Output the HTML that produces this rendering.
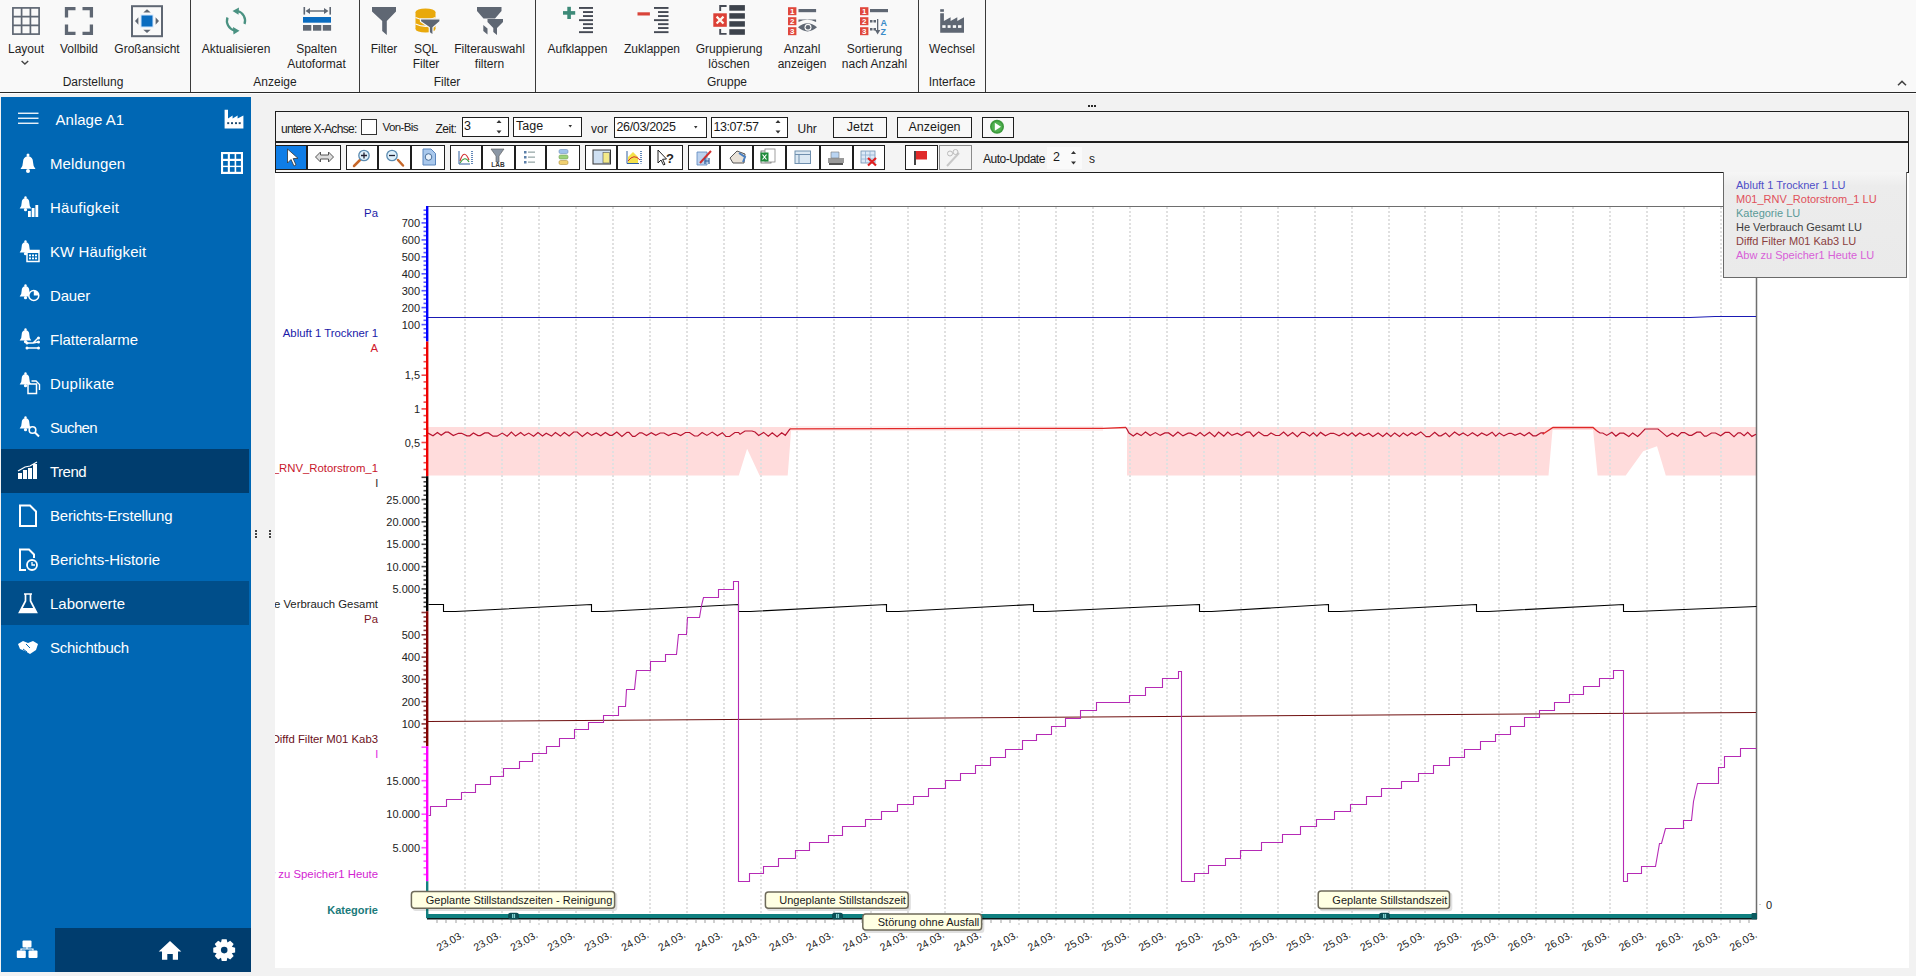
<!DOCTYPE html>
<html><head><meta charset="utf-8">
<style>
*{margin:0;padding:0;box-sizing:content-box}
html,body{width:1916px;height:976px;overflow:hidden;background:#f2f2f2;font-family:"Liberation Sans",sans-serif}
.abs{position:absolute}
.rb{position:absolute;font-size:12px;line-height:14px;color:#1f1f1f;text-align:center;white-space:nowrap}
.st{position:absolute;font-size:15px;line-height:20px;color:#fff;white-space:nowrap}
.tbt{position:absolute;font-size:12px;line-height:14px;color:#1a1a1a;white-space:nowrap}
.tbt2{position:absolute;font-size:12.5px;line-height:16px;color:#1a1a1a;white-space:nowrap}
.lg{position:absolute;left:1736px;font-size:11px;line-height:13px;white-space:nowrap}
svg text{font-family:"Liberation Sans",sans-serif}
.al{font-size:11px;fill:#222}
.dl{font-size:10.6px;fill:#222}
.sl{font-size:11.35px}
.tt{font-size:11px;fill:#1a1a1a}
</style></head><body>
<div class="abs" style="left:0;top:0;width:1916px;height:92px;background:#f9f9f9"></div>
<div class="abs" style="left:0;top:92px;width:1916px;height:1px;background:#2a2a2a"></div>
<div class="abs" style="left:0;top:93px;width:1916px;height:1px;background:#fdfdfd"></div>

<svg class="abs" style="left:0;top:0" width="1000" height="40" viewBox="0 0 1000 40">
 <g fill="none" stroke="#5f6773" stroke-width="1.7">
  <rect x="12.9" y="7.9" width="26.2" height="26.2"/>
  <path d="M21.6 8V34 M30.4 8V34 M13 16.6H39 M13 25.4H39"/>
 </g>
 <g fill="none" stroke="#5f6773" stroke-width="3.3" stroke-linecap="butt">
  <path d="M66.5 17.5V8.6H75.5 M82.5 8.6H91.4V17.5 M66.5 24.5V33.3H75.5 M82.5 33.3H91.4V24.5"/>
 </g>
 <rect x="132" y="6.2" width="30" height="30" fill="none" stroke="#5f6773" stroke-width="2"/>
 <rect x="141" y="15" width="12" height="12" fill="#0a6cc0" stroke="#cfe6ff" stroke-width="1"/>
 <g fill="#5f6773">
  <polygon points="147,9.3 143.3,12.6 150.7,12.6"/><polygon points="147,33 143.3,29.7 150.7,29.7"/>
  <polygon points="135,21 138.4,17.3 138.4,24.7"/><polygon points="159,21 155.6,17.3 155.6,24.7"/>
 </g>
 <g fill="none" stroke="#4a9282" stroke-width="2.3">
  <path d="M227.5 17.5 A10 10 0 0 0 234.5 30.5"/>
  <path d="M244.5 24 A10 10 0 0 0 237.5 11"/>
 </g>
 <g fill="#4a9282">
  <polygon points="233,27 239.5,30.8 233.5,34.5"/>
  <polygon points="239,7.5 232.5,11 238.5,14.8"/>
 </g>
 <g fill="#5f6773">
  <rect x="303.5" y="7" width="1.6" height="7.6"/><rect x="329.4" y="7" width="1.6" height="7.6"/>
  <rect x="307" y="10.3" width="20" height="1.4"/>
  <polygon points="305.5,11 310,8 310,14"/><polygon points="328.5,11 324,8 324,14"/>
  <rect x="303" y="25" width="8.3" height="5.7"/><rect x="313" y="25" width="8.3" height="5.7"/><rect x="322.8" y="25" width="8.3" height="5.7"/>
 </g>
 <rect x="303" y="17" width="28" height="5.7" fill="#0a6cc0"/>
 <polygon fill="#5f6773" points="372,7 396,7 396,11.5 386.8,21 386.8,35 382.2,31 382.2,21 372,11.5"/>
 <g>
  <ellipse cx="425.5" cy="12" rx="10" ry="3.6" fill="#e9a90c"/>
  <rect x="415.5" y="12" width="20" height="17" fill="#e9a90c"/>
  <ellipse cx="425.5" cy="29" rx="10" ry="3.6" fill="#e9a90c"/>
  <path d="M415.5 17.5 Q425.5 22 435.5 17.5 M415.5 24 Q425.5 28.5 435.5 24" stroke="#fafafa" stroke-width="1.3" fill="none"/>
  <polygon fill="#5f6773" stroke="#fafafa" stroke-width="1.2" points="420.5,18.8 440,18.8 440,21.5 433,27.6 433,35.2 429.3,32.5 429.3,27.6 420.5,21.5"/>
 </g>
 <g fill="#5f6773">
  <polygon points="477,7 501.5,7 501.5,11 495,18.6 483.5,18.6 477,11"/>
  <polygon points="487.5,19 503,19 503,22 497,28 497,35 493.3,32 493.3,28 487.5,22"/>
  <polygon points="483.3,25 487.5,28.5 487.5,34.5 483.3,31"/>
 </g>
 <g fill="#3d8a78"><rect x="567.3" y="6.8" width="3.6" height="12.2"/><rect x="563" y="11.1" width="12.2" height="3.6"/></g>
 <g fill="#454a54"><rect x="579" y="7.0" width="14" height="1.9"/><rect x="583" y="11.1" width="10" height="1.9"/><rect x="583" y="15.1" width="10" height="1.9"/><rect x="579" y="19.200000000000003" width="14" height="1.9"/><rect x="583" y="23.200000000000003" width="10" height="1.9"/><rect x="583" y="27.1" width="10" height="1.9"/><rect x="579" y="31.200000000000003" width="14" height="1.9"/></g>
 <rect x="637.5" y="12.3" width="12.4" height="3.2" fill="#d9443a"/>
 <g fill="#454a54"><rect x="654" y="7.0" width="14.5" height="1.9"/><rect x="658" y="11.1" width="10.5" height="1.9"/><rect x="658" y="15.1" width="10.5" height="1.9"/><rect x="654" y="19.200000000000003" width="14.5" height="1.9"/><rect x="658" y="23.200000000000003" width="10.5" height="1.9"/><rect x="658" y="27.1" width="10.5" height="1.9"/><rect x="654" y="31.200000000000003" width="14.5" height="1.9"/></g>
 <g fill="#3d434c">
  <rect x="729.3" y="5.1" width="15.6" height="5.6"/><rect x="729.3" y="13.2" width="15.6" height="5.5"/><rect x="729.3" y="21.2" width="15.6" height="5.5"/><rect x="729.3" y="29.2" width="15.6" height="5.6"/>
 </g>
 <path d="M726.6 6H720.2V11 M720.2 29V33.9H726.6" fill="none" stroke="#454a54" stroke-width="1.9"/>
 <rect x="713.3" y="13.3" width="13.5" height="13.5" fill="#dc4036"/>
 <path d="M716.6 16.6 L723.5 23.5 M723.5 16.6 L716.6 23.5" stroke="#fff8f0" stroke-width="2.2"/>
 <g fill="#e0473c">
  <rect x="788" y="7.2" width="8.4" height="8"/><rect x="788" y="17.2" width="8.4" height="8"/><rect x="788" y="27.2" width="8.4" height="8"/>
  <rect x="860" y="7.2" width="8.4" height="8"/><rect x="860" y="17.2" width="8.4" height="8"/><rect x="860" y="27.2" width="8.4" height="8"/>
 </g>
 <g fill="#fff" font-family="Liberation Sans" font-weight="bold" font-size="8" text-anchor="middle">
  <text x="792.2" y="14.3">1</text><text x="792.2" y="24.3">2</text><text x="792.2" y="34.3">3</text>
  <text x="864.2" y="14.3">1</text><text x="864.2" y="24.3">2</text><text x="864.2" y="34.3">3</text>
 </g>
 <g fill="#5f6773">
  <rect x="798.5" y="9" width="17.6" height="3.2"/>
  <path d="M798.5 19.5 H816.1 V22 Q807.3 17.5 798.5 22 Z"/>
  <path d="M798 27.3 Q807.5 19 817 27.3 Q807.5 35.5 798 27.3Z"/>
  <rect x="870" y="9" width="18" height="3.2"/>
 </g>
 <circle cx="808" cy="27.2" r="3.5" fill="#fafafa"/><circle cx="808" cy="27.2" r="2.3" fill="#5f6773"/>
 <g fill="#5f6773">
  <rect x="870" y="20" width="2.5" height="2.5"/><rect x="873.5" y="20" width="2.5" height="2.5"/>
  <rect x="870" y="28" width="2.5" height="2.5"/><rect x="873.5" y="28" width="2.5" height="2.5"/>
  <rect x="877" y="19" width="1.3" height="13"/><polygon points="875,30 880.3,30 877.6,34.5"/>
 </g>
 <g fill="#3a8bc8" font-family="Liberation Sans" font-weight="bold" font-size="9">
  <text x="880.5" y="26">A</text><text x="880.5" y="35">Z</text>
 </g>
 <g fill="#5f6773">
  <rect x="940.2" y="9.2" width="3.7" height="2.6"/>
  <polygon points="940.2,13.3 943.9,13.3 943.9,21 950.6,17.2 950.6,21 957.3,17.2 957.3,21 964,17.2 964,32.7 940.2,32.7"/>
 </g>
 <g fill="#fafafa"><rect x="942.3" y="25.2" width="3.3" height="2.7"/><rect x="947.6" y="25.2" width="3" height="2.7"/><rect x="952.8" y="25.2" width="3.3" height="2.7"/><rect x="958" y="25.2" width="3.4" height="2.7"/></g>
</svg>
<div class="rb" style="left:-34.0px;top:42px;width:120px">Layout</div>
<div class="rb" style="left:19.0px;top:42px;width:120px">Vollbild</div>
<div class="rb" style="left:87.0px;top:42px;width:120px">Großansicht</div>
<div class="rb" style="left:176.0px;top:42px;width:120px">Aktualisieren</div>
<div class="rb" style="left:256.5px;top:42px;width:120px">Spalten</div>
<div class="rb" style="left:256.5px;top:56.5px;width:120px">Autoformat</div>
<div class="rb" style="left:324.0px;top:42px;width:120px">Filter</div>
<div class="rb" style="left:366.0px;top:42px;width:120px">SQL</div>
<div class="rb" style="left:366.0px;top:56.5px;width:120px">Filter</div>
<div class="rb" style="left:429.5px;top:42px;width:120px">Filterauswahl</div>
<div class="rb" style="left:429.5px;top:56.5px;width:120px">filtern</div>
<div class="rb" style="left:517.5px;top:42px;width:120px">Aufklappen</div>
<div class="rb" style="left:592.0px;top:42px;width:120px">Zuklappen</div>
<div class="rb" style="left:669.0px;top:42px;width:120px">Gruppierung</div>
<div class="rb" style="left:669.0px;top:56.5px;width:120px">löschen</div>
<div class="rb" style="left:742.0px;top:42px;width:120px">Anzahl</div>
<div class="rb" style="left:742.0px;top:56.5px;width:120px">anzeigen</div>
<div class="rb" style="left:814.5px;top:42px;width:120px">Sortierung</div>
<div class="rb" style="left:814.5px;top:56.5px;width:120px">nach Anzahl</div>
<div class="rb" style="left:892.0px;top:42px;width:120px">Wechsel</div>
<div class="rb" style="left:33.0px;top:75px;width:120px">Darstellung</div>
<div class="rb" style="left:215.0px;top:75px;width:120px">Anzeige</div>
<div class="rb" style="left:387.0px;top:75px;width:120px">Filter</div>
<div class="rb" style="left:667.0px;top:75px;width:120px">Gruppe</div>
<div class="rb" style="left:892.0px;top:75px;width:120px">Interface</div>
<div class="abs" style="left:190px;top:0;width:1px;height:92px;background:#3a3a3a"></div>
<div class="abs" style="left:359px;top:0;width:1px;height:92px;background:#3a3a3a"></div>
<div class="abs" style="left:535px;top:0;width:1px;height:92px;background:#3a3a3a"></div>
<div class="abs" style="left:918px;top:0;width:1px;height:92px;background:#3a3a3a"></div>
<div class="abs" style="left:985px;top:0;width:1px;height:92px;background:#3a3a3a"></div>
<svg class="abs" style="left:0;top:0" width="40" height="70"><path d="M21.6 60.9 L24.9 64 L28.2 60.9" fill="none" stroke="#444" stroke-width="1.4"/></svg>
<svg class="abs" style="left:1880px;top:70px" width="36" height="20" viewBox="1880 70 36 20"><path d="M1898 85.2 L1902 81.4 L1906 85.2" fill="none" stroke="#444" stroke-width="1.5"/></svg>
<div class="abs" style="left:1px;top:97px;width:250px;height:875px;background:#0067b4"></div>
<div class="abs" style="left:1px;top:449px;width:248px;height:44px;background:#003d6e"></div>
<div class="abs" style="left:1px;top:581px;width:248px;height:44px;background:#004e8a"></div>
<div class="abs" style="left:55px;top:928px;width:196px;height:44px;background:#003d6e"></div>
<div class="st" style="left:55.5px;top:110px;letter-spacing:0.024px">Anlage A1</div>
<div class="st" style="left:50px;top:154px;letter-spacing:0.121px">Meldungen</div>
<div class="st" style="left:50px;top:198px;letter-spacing:0.244px">Häufigkeit</div>
<div class="st" style="left:50px;top:242px;letter-spacing:0.096px">KW Häufigkeit</div>
<div class="st" style="left:50px;top:286px;letter-spacing:-0.165px">Dauer</div>
<div class="st" style="left:50px;top:330px;letter-spacing:-0.022px">Flatteralarme</div>
<div class="st" style="left:50px;top:374px;letter-spacing:0.206px">Duplikate</div>
<div class="st" style="left:50px;top:418px;letter-spacing:-0.656px">Suchen</div>
<div class="st" style="left:50px;top:462px;letter-spacing:-0.51px">Trend</div>
<div class="st" style="left:50px;top:506px;letter-spacing:-0.188px">Berichts-Erstellung</div>
<div class="st" style="left:50px;top:550px;letter-spacing:0.004px">Berichts-Historie</div>
<div class="st" style="left:50px;top:594px;letter-spacing:-0.006px">Laborwerte</div>
<div class="st" style="left:50px;top:638px;letter-spacing:-0.252px">Schichtbuch</div>
<svg class="abs" style="left:0;top:90px" width="251" height="886" viewBox="0 90 251 886">
<g fill="#fff"><rect x="18" y="112.6" width="20.5" height="1.3"/><rect x="18" y="117.6" width="20.5" height="1.3"/><rect x="18" y="122.6" width="20.5" height="1.3"/></g>
<polygon fill="#fff" points="224.6,109.8 228,109.8 228,118.6 232.6,115.6 232.6,118.6 237.6,115.6 237.6,118.6 243.4,115.6 243.4,128.4 224.6,128.4"/>
<g fill="#1e4a70"><rect x="227.2" y="122.2" width="2" height="1.9"/><rect x="231" y="122.2" width="2" height="1.9"/><rect x="235" y="122.2" width="2" height="1.9"/><rect x="238.7" y="122.2" width="2" height="1.9"/></g>
<rect x="221" y="152" width="22" height="22" fill="#fff"/>
<rect x="223.1" y="154.1" width="4.7" height="4.7" fill="#0067b4"/>
<rect x="229.9" y="154.1" width="4.7" height="4.7" fill="#0067b4"/>
<rect x="236.2" y="154.1" width="4.7" height="4.7" fill="#0067b4"/>
<rect x="223.1" y="161" width="4.7" height="4.7" fill="#0067b4"/>
<rect x="229.9" y="161" width="4.7" height="4.7" fill="#0067b4"/>
<rect x="236.2" y="161" width="4.7" height="4.7" fill="#0067b4"/>
<rect x="223.1" y="167.1" width="4.7" height="4.7" fill="#0067b4"/>
<rect x="229.9" y="167.1" width="4.7" height="4.7" fill="#0067b4"/>
<rect x="236.2" y="167.1" width="4.7" height="4.7" fill="#0067b4"/>
<path d="M20.5 169 Q23 166 23 162 Q23 157 28 156 Q33 157 33 162 Q33 166 35.5 169 Z" fill="#fff"/><circle cx="28" cy="155" r="1.5" fill="#fff"/><circle cx="28" cy="171" r="2" fill="#fff"/>
<path d="M19.7 208.5 Q21.7 206.5 21.7 202.5 Q21.7 198.5 25.5 198.0 Q29.3 198.5 29.3 202.5 Q29.3 206.5 31.3 208.5 Z" fill="#fff"/><circle cx="25.5" cy="197.5" r="1.2" fill="#fff"/><circle cx="25.5" cy="209.7" r="1.6" fill="#fff"/>
<g fill="#fff"><rect x="28" y="211" width="2.8" height="6"/><rect x="31.7" y="208" width="2.8" height="9"/><rect x="35.4" y="205" width="2.8" height="12"/></g>
<path d="M19.7 252.5 Q21.7 250.5 21.7 246.5 Q21.7 242.5 25.5 242.0 Q29.3 242.5 29.3 246.5 Q29.3 250.5 31.3 252.5 Z" fill="#fff"/><circle cx="25.5" cy="241.5" r="1.2" fill="#fff"/><circle cx="25.5" cy="253.7" r="1.6" fill="#fff"/>
<rect x="27" y="250.5" width="12" height="11" fill="#0067b4" stroke="#fff" stroke-width="1.5"/><rect x="27" y="250.5" width="12" height="2.5" fill="#fff"/><g fill="#fff"><rect x="29" y="254.5" width="2" height="1.8"/><rect x="32" y="254.5" width="2" height="1.8"/><rect x="35" y="254.5" width="2" height="1.8"/><rect x="29" y="257.5" width="2" height="1.8"/><rect x="32" y="257.5" width="2" height="1.8"/><rect x="35" y="257.5" width="2" height="1.8"/></g>
<path d="M19.7 296.5 Q21.7 294.5 21.7 290.5 Q21.7 286.5 25.5 286.0 Q29.3 286.5 29.3 290.5 Q29.3 294.5 31.3 296.5 Z" fill="#fff"/><circle cx="25.5" cy="285.5" r="1.2" fill="#fff"/><circle cx="25.5" cy="297.7" r="1.6" fill="#fff"/>
<circle cx="33.8" cy="295.5" r="5" fill="#0067b4" stroke="#fff" stroke-width="1.5"/><path d="M33.8 295.5 V290.5 A5 5 0 0 1 38.8 295.5 Z" fill="#fff"/>
<path d="M19.7 340.5 Q21.7 338.5 21.7 334.5 Q21.7 330.5 25.5 330.0 Q29.3 330.5 29.3 334.5 Q29.3 338.5 31.3 340.5 Z" fill="#fff"/><circle cx="25.5" cy="329.5" r="1.2" fill="#fff"/><circle cx="25.5" cy="341.7" r="1.6" fill="#fff"/>
<path d="M27 343 H33 L38 338 M33 343 L38 342 M27 348 H38" stroke="#fff" stroke-width="1.4" fill="none"/><g fill="#fff"><circle cx="27" cy="343" r="1.5"/><circle cx="38.5" cy="338" r="1.5"/><circle cx="38.5" cy="342" r="1.5"/><circle cx="27" cy="348" r="1.5"/><circle cx="38.5" cy="348" r="1.5"/></g>
<path d="M19.7 384.5 Q21.7 382.5 21.7 378.5 Q21.7 374.5 25.5 374.0 Q29.3 374.5 29.3 378.5 Q29.3 382.5 31.3 384.5 Z" fill="#fff"/><circle cx="25.5" cy="373.5" r="1.2" fill="#fff"/><circle cx="25.5" cy="385.7" r="1.6" fill="#fff"/>
<path d="M31.5 381 H36 L39.5 384.5 V390" stroke="#fff" stroke-width="1.4" fill="none"/><rect x="28" y="384" width="8.5" height="9.5" fill="#0067b4" stroke="#fff" stroke-width="1.5"/>
<path d="M19.7 428.5 Q21.7 426.5 21.7 422.5 Q21.7 418.5 25.5 418.0 Q29.3 418.5 29.3 422.5 Q29.3 426.5 31.3 428.5 Z" fill="#fff"/><circle cx="25.5" cy="417.5" r="1.2" fill="#fff"/><circle cx="25.5" cy="429.7" r="1.6" fill="#fff"/>
<circle cx="32.5" cy="430" r="3.3" fill="#0067b4" stroke="#fff" stroke-width="1.6"/><path d="M35 432.5 L39 436.5" stroke="#fff" stroke-width="2"/>
<g fill="#fff"><rect x="18" y="473" width="4" height="6"/><rect x="23" y="470" width="4" height="9"/><rect x="28" y="468" width="4" height="11"/><rect x="33" y="464" width="4" height="15"/></g><path d="M18 471 L25 467 L30 466 L37 462" stroke="#fff" stroke-width="1.2" fill="none"/>
<path d="M20 505.5 H30 L36 511.5 V526 H20 Z" fill="none" stroke="#fff" stroke-width="2"/>
<path d="M26 570 H20 V549.5 H29 L34 554.5 V558" fill="none" stroke="#fff" stroke-width="2"/><circle cx="32" cy="565" r="5" fill="none" stroke="#fff" stroke-width="1.8"/><path d="M32 562 V565 H35" stroke="#fff" stroke-width="1.3" fill="none"/>
<path d="M24 594 H32 M25.5 594 V601 L19.5 612.5 H36.5 L30.5 601 V594" fill="none" stroke="#fff" stroke-width="1.7"/><path d="M22 608 H34 L36 612 H20Z" fill="#fff"/>
<path d="M18 644 L23 641 L28 643 L33 641 L38 644 L36 650 L30 654 L25 651 L20 649 Z" fill="#fff"/><path d="M26 644 L30 648 M23 649 L27 652" stroke="#0067b4" stroke-width="1"/>
<g fill="#fff"><rect x="22.5" y="940.5" width="9" height="7" rx="1"/><rect x="16.8" y="950.5" width="9" height="7.5" rx="1"/><rect x="28.5" y="950.5" width="9" height="7.5" rx="1"/></g><path d="M27 947 V949.5 M21 950.5 V949 H33 V950.5" stroke="#fff" stroke-width="1.2" fill="none"/>
<polygon fill="#fff" points="170,941 181.3,951.5 178,951.5 178,959.8 172.8,959.8 172.8,954 167.3,954 167.3,959.8 162,959.8 162,951.5 158.7,951.5"/>
<polygon fill="#fff" points="235.13,947.66 235.13,952.54 231.50,953.36 231.67,952.96 233.66,956.10 230.20,959.56 227.06,957.57 227.46,957.40 226.64,961.03 221.76,961.03 220.94,957.40 221.34,957.57 218.20,959.56 214.74,956.10 216.73,952.96 216.90,953.36 213.27,952.54 213.27,947.66 216.90,946.84 216.73,947.24 214.74,944.10 218.20,940.64 221.34,942.63 220.94,942.80 221.76,939.17 226.64,939.17 227.46,942.80 227.06,942.63 230.20,940.64 233.66,944.10 231.67,947.24 231.50,946.84"/><circle cx="224.2" cy="950.1" r="3.3" fill="#003d6e"/>
</svg>
<div class="abs" style="left:275px;top:172px;width:1634px;height:796px;background:#fff"></div>
<div class="abs" style="left:275px;top:111px;width:1632px;height:60px;border:1px solid #1e1e1e;background:#f4f4f4"></div>
<div class="abs" style="left:276px;top:141px;width:1632px;height:2px;background:#1e1e1e"></div>
<div class="tbt" style="left:281px;top:121.5px;letter-spacing:-0.7px">untere X-Achse:</div>
<div class="abs" style="left:361px;top:119px;width:14px;height:13.8px;border:1px solid #333;background:#fff"></div>
<div class="tbt" style="left:382.5px;top:120px;letter-spacing:-0.6px;font-size:11.5px">Von-Bis</div>
<div class="tbt" style="left:435.5px;top:121.5px;letter-spacing:-0.5px">Zeit:</div>
<div class="abs" style="left:462px;top:116.5px;width:45px;height:18.5px;border:1px solid #1e1e1e;background:#fff;"></div>
<div class="tbt2" style="left:464px;top:118px">3</div>
<div class="abs" style="left:513px;top:116.5px;width:67px;height:18.5px;border:1px solid #1e1e1e;background:#fff;"></div>
<div class="tbt2" style="left:516px;top:118px">Tage</div>
<div class="tbt" style="left:591px;top:121.5px">vor</div>
<div class="abs" style="left:614px;top:117px;width:91px;height:19px;border:1px solid #1e1e1e;background:#fff;"></div>
<div class="tbt2" style="left:616.5px;top:118.5px;letter-spacing:-0.35px">26/03/2025</div>
<div class="abs" style="left:711px;top:117px;width:75px;height:19px;border:1px solid #1e1e1e;background:#fff;"></div>
<div class="tbt2" style="left:713.5px;top:118.5px;letter-spacing:-0.45px">13:07:57</div>
<div class="tbt" style="left:797.5px;top:121.5px">Uhr</div>
<div class="abs" style="left:833px;top:116.5px;width:52px;height:19.5px;border:1px solid #1e1e1e;background:#fff;background:#f8f8f8"></div>
<div class="tbt2" style="left:833px;top:118.5px;width:54px;text-align:center">Jetzt</div>
<div class="abs" style="left:897px;top:116.5px;width:73px;height:19.5px;border:1px solid #1e1e1e;background:#fff;background:#f8f8f8"></div>
<div class="tbt2" style="left:897px;top:118.5px;width:75px;text-align:center">Anzeigen</div>
<div class="abs" style="left:982px;top:116.5px;width:30px;height:19.5px;border:1px solid #1e1e1e;background:#fff;background:#f8f8f8"></div>
<div class="tbt" style="left:983px;top:152px;letter-spacing:-0.5px">Auto-Update</div>
<div class="abs" style="left:1047px;top:147px;width:35px;height:22px;background:#fafafa"></div>
<div class="tbt2" style="left:1053px;top:148.5px">2</div>
<div class="tbt" style="left:1089px;top:152px">s</div>
<div class="abs" style="left:275px;top:145px;width:30px;height:23px;border:1px solid #1e1e1e;background:#0f7de6"></div>
<div class="abs" style="left:307px;top:145px;width:32px;height:23px;border:1px solid #1e1e1e;background:#fff"></div>
<div class="abs" style="left:346px;top:145px;width:30px;height:23px;border:1px solid #1e1e1e;background:#fff"></div>
<div class="abs" style="left:378px;top:145px;width:31px;height:23px;border:1px solid #1e1e1e;background:#fff"></div>
<div class="abs" style="left:411px;top:145px;width:32px;height:23px;border:1px solid #1e1e1e;background:#fff"></div>
<div class="abs" style="left:450px;top:145px;width:30px;height:23px;border:1px solid #1e1e1e;background:#fff"></div>
<div class="abs" style="left:482px;top:145px;width:31px;height:23px;border:1px solid #1e1e1e;background:#fff"></div>
<div class="abs" style="left:515px;top:145px;width:29px;height:23px;border:1px solid #1e1e1e;background:#fff"></div>
<div class="abs" style="left:546px;top:145px;width:32px;height:23px;border:1px solid #1e1e1e;background:#fff"></div>
<div class="abs" style="left:585px;top:145px;width:30px;height:23px;border:1px solid #1e1e1e;background:#fff"></div>
<div class="abs" style="left:617px;top:145px;width:31px;height:23px;border:1px solid #1e1e1e;background:#fff"></div>
<div class="abs" style="left:650px;top:145px;width:31px;height:23px;border:1px solid #1e1e1e;background:#fff"></div>
<div class="abs" style="left:688px;top:145px;width:30px;height:23px;border:1px solid #1e1e1e;background:#fff"></div>
<div class="abs" style="left:720px;top:145px;width:31px;height:23px;border:1px solid #1e1e1e;background:#fff"></div>
<div class="abs" style="left:753px;top:145px;width:31px;height:23px;border:1px solid #1e1e1e;background:#fff"></div>
<div class="abs" style="left:786px;top:145px;width:32px;height:23px;border:1px solid #1e1e1e;background:#fff"></div>
<div class="abs" style="left:820px;top:145px;width:31px;height:23px;border:1px solid #1e1e1e;background:#fff"></div>
<div class="abs" style="left:853px;top:145px;width:30px;height:23px;border:1px solid #1e1e1e;background:#fff"></div>
<div class="abs" style="left:905px;top:145px;width:31px;height:23px;border:1px solid #1e1e1e;background:#fff"></div>
<div class="abs" style="left:939px;top:145px;width:31px;height:23px;border:1px solid #8a8a8a;background:#f4f4f4"></div>
<svg class="abs" style="left:0;top:100px" width="1100" height="80" viewBox="0 100 1100 80">
 <path d="M287.5 149 L287.5 163 L291 159.5 L294 166 L296 165 L293.2 158.6 L298 158.3 Z" fill="#fff" stroke="#333" stroke-width="0.8"/>
 <path d="M315.5 157 L320.5 152 V155 H328.5 V152 L333.5 157 L328.5 162 V159 H320.5 V162 Z" fill="#ddd" stroke="#555" stroke-width="1"/>
 <g stroke="#c7682a" stroke-width="2.5" stroke-linecap="round"><path d="M354 166 L360 160"/><path d="M398 160 L403 165.5"/></g>
 <circle cx="364" cy="155.5" r="5.2" fill="#dff0fb" stroke="#5a8ab0" stroke-width="1.3"/>
 <path d="M361 155.5 H367 M364 152.5 V158.5" stroke="#223" stroke-width="1.3"/>
 <circle cx="392" cy="155.5" r="5.2" fill="#dff0fb" stroke="#5a8ab0" stroke-width="1.3"/>
 <path d="M389 155.5 H395" stroke="#223" stroke-width="1.3"/>
 <path d="M423 149 H431 L435.5 153.5 V165 H423 Z" fill="#a9c8ec" stroke="#5b86bd" stroke-width="1"/>
 <circle cx="428.5" cy="157" r="3.3" fill="#e8f2fc" stroke="#4a6f9a" stroke-width="1"/>
 <path d="M459 151 V164 H470" stroke="#3060a0" stroke-width="1" fill="none"/><path d="M472 151 V164" stroke="#3060a0" stroke-width="1.5" stroke-dasharray="1,1" fill="none"/>
 <path d="M460 161 Q464 148 469 160" stroke="#d03030" fill="none" stroke-width="1.2"/><path d="M460 163 Q465 155 469 162" stroke="#40a040" fill="none" stroke-width="1.2"/>
 <path d="M491 149 H504 L499 156 V162 H496 V156 Z" fill="#8b97a5" stroke="#555" stroke-width="0.6"/>
 <text x="498" y="166.5" font-size="6.5" font-family="Liberation Sans" font-weight="bold" text-anchor="middle" fill="#333">LAB</text>
 <g fill="#5b7fa8"><rect x="524" y="151" width="2.5" height="2.5"/><rect x="524" y="156" width="2.5" height="2.5"/><rect x="524" y="161" width="2.5" height="2.5"/></g>
 <g fill="#9aa"><rect x="528" y="151.5" width="7" height="1.3"/><rect x="528" y="156.5" width="7" height="1.3"/><rect x="528" y="161.5" width="7" height="1.3"/></g>
 <rect x="559" y="149.5" width="9" height="4" rx="1.5" fill="#9ec2ea" stroke="#6b8fba" stroke-width="0.6"/>
 <rect x="559" y="155" width="9" height="4" rx="1.5" fill="#9bd27a" stroke="#6b9a50" stroke-width="0.6"/>
 <rect x="559" y="160.5" width="9" height="4" rx="1.5" fill="#f0d070" stroke="#b09040" stroke-width="0.6"/>
 <rect x="593" y="150" width="17.5" height="14" fill="#cfe0f2" stroke="#333" stroke-width="1"/>
 <rect x="603" y="152.5" width="6.5" height="10.5" fill="#f3ea8a" stroke="#555" stroke-width="0.6"/>
 <path d="M627 151 V163.5 H639" stroke="#3060a0" stroke-width="1" fill="none"/><path d="M641 151 V163.5" stroke="#3060a0" stroke-width="1.5" stroke-dasharray="1,1" fill="none"/>
 <path d="M628 157 L633 152 L638 157 V163 H628 Z" fill="#f4e14a"/><path d="M628 161 Q634 153 640 160" stroke="#d03030" fill="none" stroke-width="1"/>
 <path d="M658 150 L658 163 L661 160 L663.5 165 L665 164.3 L662.6 159.3 L666.5 159 Z" fill="#fff" stroke="#222" stroke-width="1"/>
 <text x="666" y="162.5" font-size="13" font-family="Liberation Sans" font-weight="bold" fill="#222">?</text>
 <path d="M697 152 H707 V165 H697 Z" fill="#bcd2ee" stroke="#5b86bd" stroke-width="0.8"/><path d="M700 163 L711 151" stroke="#d03030" stroke-width="2"/><path d="M705 164 V158 M709 164 V158 M705 161 H709" stroke="#2a5a9a" stroke-width="1.2"/>
 <path d="M730 158 L737 151 L745 154 L744 163 L733 163 Z" fill="#e9e2d8" stroke="#555" stroke-width="1"/><path d="M739 153 L745 157 L743 162" stroke="#4a7fc0" stroke-width="2" fill="none"/>
 <rect x="761" y="151" width="10" height="12" fill="#fff" stroke="#666" stroke-width="0.8"/><rect x="765" y="149" width="10" height="13" fill="#fff" stroke="#888" stroke-width="0.8"/><rect x="760.5" y="152.5" width="8" height="9" fill="#1e8a3a"/><path d="M762.5 154.5 L766.5 159.5 M766.5 154.5 L762.5 159.5" stroke="#fff" stroke-width="1.2"/>
 <rect x="795" y="151" width="15.5" height="12.5" fill="#dbe8f3" stroke="#6f8fae" stroke-width="1"/><path d="M795 154.5 H810.5 M799 154.5 V163.5" stroke="#6f8fae" stroke-width="1"/>
 <path d="M828 158 H844 V163 H828 Z" fill="#9a9a9a"/><path d="M831 152 H839 V158 H831 Z" fill="#b9d4f2" stroke="#777" stroke-width="0.6"/><path d="M829 163 H843 V165 H829 Z" fill="#555"/>
 <rect x="861" y="151" width="14" height="12" fill="#dde9f7" stroke="#6f8fae" stroke-width="0.8"/><path d="M861 155 H875 M861 159 H875 M865.5 151 V163 M870 151 V163" stroke="#8fb0d0" stroke-width="0.8"/><path d="M868 158 L876 165.5 M876 158 L868 165.5" stroke="#e02020" stroke-width="2.2"/>
 <path d="M915 151 V165" stroke="#444" stroke-width="2"/><path d="M916 151 H927 V159.5 H916 Z" fill="#e02a2a"/>
 <path d="M947 166 L959 153" stroke="#c8c8c8" stroke-width="2"/><circle cx="950" cy="153.5" r="2.5" fill="none" stroke="#bbb" stroke-width="1"/><circle cx="955.5" cy="152" r="2.5" fill="none" stroke="#bbb" stroke-width="1"/>
 <circle cx="997" cy="126.8" r="7" fill="#3d9a3d"/><circle cx="997" cy="126.8" r="5.3" fill="#4fb04f"/><path d="M994.8 122.8 L1001 126.8 L994.8 130.8 Z" fill="#fff"/>
 <g fill="#333"><polygon points="499,120 496.5,123 501.5,123"/><polygon points="499,133.5 496.5,130.5 501.5,130.5"/>
 <polygon points="572,125 568.5,125 570.25,127.5"/><polygon points="697.5,126 694,126 695.75,128.5"/>
 <polygon points="778,120 775.5,123 780.5,123"/><polygon points="778,133.5 775.5,130.5 780.5,130.5"/>
 <polygon points="1073.5,151 1071,154 1076,154"/><polygon points="1073.5,164.5 1071,161.5 1076,161.5"/></g>
</svg>
<div class="abs" style="left:1088px;top:105px;width:2px;height:2px;background:#2a2a2a"></div><div class="abs" style="left:1091px;top:105px;width:2px;height:2px;background:#2a2a2a"></div><div class="abs" style="left:1094px;top:105px;width:2px;height:2px;background:#2a2a2a"></div>
<div class="abs" style="left:255px;top:530px;width:2px;height:8px;background:repeating-linear-gradient(180deg,#444 0 2px,transparent 2px 3px)"></div>
<div class="abs" style="left:268.5px;top:530px;width:2px;height:8px;background:repeating-linear-gradient(180deg,#444 0 2px,transparent 2px 3px)"></div>
<svg class="abs" style="left:0;top:0;overflow:hidden" width="1916" height="976" viewBox="0 0 1916 976">
<defs><clipPath id="cp"><rect x="275" y="172" width="1634" height="796"/></clipPath></defs>
<g clip-path="url(#cp)">
<polygon fill="#ffdcdc" points="428,427 791.4,427 787.7,475.6 759.6,475.6 747.1,448.8 738.8,475.6 428,475.6"/>
<polygon fill="#ffeded" points="791,426 1103,426 1103,431 791,431"/>
<polygon fill="#ffdcdc" points="1127,427 1756,427 1756,475.6 1665.8,475.6 1657,446.3 1643.2,451.3 1625.7,475.6 1597.6,475.6 1593.1,430 1552.5,430 1548.5,475.6 1127,475.6"/>
<line x1="465" y1="207" x2="465" y2="926" stroke="#e0e0e0" stroke-width="2" stroke-dasharray="2,2"/>
<line x1="502" y1="207" x2="502" y2="926" stroke="#e0e0e0" stroke-width="2" stroke-dasharray="2,2"/>
<line x1="539" y1="207" x2="539" y2="926" stroke="#e0e0e0" stroke-width="2" stroke-dasharray="2,2"/>
<line x1="576" y1="207" x2="576" y2="926" stroke="#e0e0e0" stroke-width="2" stroke-dasharray="2,2"/>
<line x1="613" y1="207" x2="613" y2="926" stroke="#e0e0e0" stroke-width="2" stroke-dasharray="2,2"/>
<line x1="650" y1="207" x2="650" y2="926" stroke="#e0e0e0" stroke-width="2" stroke-dasharray="2,2"/>
<line x1="687" y1="207" x2="687" y2="926" stroke="#e0e0e0" stroke-width="2" stroke-dasharray="2,2"/>
<line x1="724" y1="207" x2="724" y2="926" stroke="#e0e0e0" stroke-width="2" stroke-dasharray="2,2"/>
<line x1="761" y1="207" x2="761" y2="926" stroke="#e0e0e0" stroke-width="2" stroke-dasharray="2,2"/>
<line x1="797" y1="207" x2="797" y2="926" stroke="#e0e0e0" stroke-width="2" stroke-dasharray="2,2"/>
<line x1="834" y1="207" x2="834" y2="926" stroke="#e0e0e0" stroke-width="2" stroke-dasharray="2,2"/>
<line x1="871" y1="207" x2="871" y2="926" stroke="#e0e0e0" stroke-width="2" stroke-dasharray="2,2"/>
<line x1="908" y1="207" x2="908" y2="926" stroke="#e0e0e0" stroke-width="2" stroke-dasharray="2,2"/>
<line x1="945" y1="207" x2="945" y2="926" stroke="#e0e0e0" stroke-width="2" stroke-dasharray="2,2"/>
<line x1="982" y1="207" x2="982" y2="926" stroke="#e0e0e0" stroke-width="2" stroke-dasharray="2,2"/>
<line x1="1019" y1="207" x2="1019" y2="926" stroke="#e0e0e0" stroke-width="2" stroke-dasharray="2,2"/>
<line x1="1056" y1="207" x2="1056" y2="926" stroke="#e0e0e0" stroke-width="2" stroke-dasharray="2,2"/>
<line x1="1093" y1="207" x2="1093" y2="926" stroke="#e0e0e0" stroke-width="2" stroke-dasharray="2,2"/>
<line x1="1130" y1="207" x2="1130" y2="926" stroke="#e0e0e0" stroke-width="2" stroke-dasharray="2,2"/>
<line x1="1167" y1="207" x2="1167" y2="926" stroke="#e0e0e0" stroke-width="2" stroke-dasharray="2,2"/>
<line x1="1204" y1="207" x2="1204" y2="926" stroke="#e0e0e0" stroke-width="2" stroke-dasharray="2,2"/>
<line x1="1241" y1="207" x2="1241" y2="926" stroke="#e0e0e0" stroke-width="2" stroke-dasharray="2,2"/>
<line x1="1278" y1="207" x2="1278" y2="926" stroke="#e0e0e0" stroke-width="2" stroke-dasharray="2,2"/>
<line x1="1315" y1="207" x2="1315" y2="926" stroke="#e0e0e0" stroke-width="2" stroke-dasharray="2,2"/>
<line x1="1352" y1="207" x2="1352" y2="926" stroke="#e0e0e0" stroke-width="2" stroke-dasharray="2,2"/>
<line x1="1389" y1="207" x2="1389" y2="926" stroke="#e0e0e0" stroke-width="2" stroke-dasharray="2,2"/>
<line x1="1425" y1="207" x2="1425" y2="926" stroke="#e0e0e0" stroke-width="2" stroke-dasharray="2,2"/>
<line x1="1462" y1="207" x2="1462" y2="926" stroke="#e0e0e0" stroke-width="2" stroke-dasharray="2,2"/>
<line x1="1499" y1="207" x2="1499" y2="926" stroke="#e0e0e0" stroke-width="2" stroke-dasharray="2,2"/>
<line x1="1536" y1="207" x2="1536" y2="926" stroke="#e0e0e0" stroke-width="2" stroke-dasharray="2,2"/>
<line x1="1573" y1="207" x2="1573" y2="926" stroke="#e0e0e0" stroke-width="2" stroke-dasharray="2,2"/>
<line x1="1610" y1="207" x2="1610" y2="926" stroke="#e0e0e0" stroke-width="2" stroke-dasharray="2,2"/>
<line x1="1647" y1="207" x2="1647" y2="926" stroke="#e0e0e0" stroke-width="2" stroke-dasharray="2,2"/>
<line x1="1684" y1="207" x2="1684" y2="926" stroke="#e0e0e0" stroke-width="2" stroke-dasharray="2,2"/>
<line x1="1721" y1="207" x2="1721" y2="926" stroke="#e0e0e0" stroke-width="2" stroke-dasharray="2,2"/>
<line x1="437" y1="920" x2="437" y2="923" stroke="#d0d0d0" stroke-width="2"/>
<line x1="446" y1="920" x2="446" y2="923" stroke="#d0d0d0" stroke-width="2"/>
<line x1="456" y1="920" x2="456" y2="923" stroke="#d0d0d0" stroke-width="2"/>
<line x1="474" y1="920" x2="474" y2="923" stroke="#d0d0d0" stroke-width="2"/>
<line x1="483" y1="920" x2="483" y2="923" stroke="#d0d0d0" stroke-width="2"/>
<line x1="493" y1="920" x2="493" y2="923" stroke="#d0d0d0" stroke-width="2"/>
<line x1="511" y1="920" x2="511" y2="923" stroke="#d0d0d0" stroke-width="2"/>
<line x1="520" y1="920" x2="520" y2="923" stroke="#d0d0d0" stroke-width="2"/>
<line x1="530" y1="920" x2="530" y2="923" stroke="#d0d0d0" stroke-width="2"/>
<line x1="548" y1="920" x2="548" y2="923" stroke="#d0d0d0" stroke-width="2"/>
<line x1="557" y1="920" x2="557" y2="923" stroke="#d0d0d0" stroke-width="2"/>
<line x1="567" y1="920" x2="567" y2="923" stroke="#d0d0d0" stroke-width="2"/>
<line x1="585" y1="920" x2="585" y2="923" stroke="#d0d0d0" stroke-width="2"/>
<line x1="594" y1="920" x2="594" y2="923" stroke="#d0d0d0" stroke-width="2"/>
<line x1="603" y1="920" x2="603" y2="923" stroke="#d0d0d0" stroke-width="2"/>
<line x1="622" y1="920" x2="622" y2="923" stroke="#d0d0d0" stroke-width="2"/>
<line x1="631" y1="920" x2="631" y2="923" stroke="#d0d0d0" stroke-width="2"/>
<line x1="640" y1="920" x2="640" y2="923" stroke="#d0d0d0" stroke-width="2"/>
<line x1="659" y1="920" x2="659" y2="923" stroke="#d0d0d0" stroke-width="2"/>
<line x1="668" y1="920" x2="668" y2="923" stroke="#d0d0d0" stroke-width="2"/>
<line x1="677" y1="920" x2="677" y2="923" stroke="#d0d0d0" stroke-width="2"/>
<line x1="696" y1="920" x2="696" y2="923" stroke="#d0d0d0" stroke-width="2"/>
<line x1="705" y1="920" x2="705" y2="923" stroke="#d0d0d0" stroke-width="2"/>
<line x1="714" y1="920" x2="714" y2="923" stroke="#d0d0d0" stroke-width="2"/>
<line x1="733" y1="920" x2="733" y2="923" stroke="#d0d0d0" stroke-width="2"/>
<line x1="742" y1="920" x2="742" y2="923" stroke="#d0d0d0" stroke-width="2"/>
<line x1="751" y1="920" x2="751" y2="923" stroke="#d0d0d0" stroke-width="2"/>
<line x1="770" y1="920" x2="770" y2="923" stroke="#d0d0d0" stroke-width="2"/>
<line x1="779" y1="920" x2="779" y2="923" stroke="#d0d0d0" stroke-width="2"/>
<line x1="788" y1="920" x2="788" y2="923" stroke="#d0d0d0" stroke-width="2"/>
<line x1="807" y1="920" x2="807" y2="923" stroke="#d0d0d0" stroke-width="2"/>
<line x1="816" y1="920" x2="816" y2="923" stroke="#d0d0d0" stroke-width="2"/>
<line x1="825" y1="920" x2="825" y2="923" stroke="#d0d0d0" stroke-width="2"/>
<line x1="844" y1="920" x2="844" y2="923" stroke="#d0d0d0" stroke-width="2"/>
<line x1="853" y1="920" x2="853" y2="923" stroke="#d0d0d0" stroke-width="2"/>
<line x1="862" y1="920" x2="862" y2="923" stroke="#d0d0d0" stroke-width="2"/>
<line x1="881" y1="920" x2="881" y2="923" stroke="#d0d0d0" stroke-width="2"/>
<line x1="890" y1="920" x2="890" y2="923" stroke="#d0d0d0" stroke-width="2"/>
<line x1="899" y1="920" x2="899" y2="923" stroke="#d0d0d0" stroke-width="2"/>
<line x1="918" y1="920" x2="918" y2="923" stroke="#d0d0d0" stroke-width="2"/>
<line x1="927" y1="920" x2="927" y2="923" stroke="#d0d0d0" stroke-width="2"/>
<line x1="936" y1="920" x2="936" y2="923" stroke="#d0d0d0" stroke-width="2"/>
<line x1="954" y1="920" x2="954" y2="923" stroke="#d0d0d0" stroke-width="2"/>
<line x1="964" y1="920" x2="964" y2="923" stroke="#d0d0d0" stroke-width="2"/>
<line x1="973" y1="920" x2="973" y2="923" stroke="#d0d0d0" stroke-width="2"/>
<line x1="991" y1="920" x2="991" y2="923" stroke="#d0d0d0" stroke-width="2"/>
<line x1="1001" y1="920" x2="1001" y2="923" stroke="#d0d0d0" stroke-width="2"/>
<line x1="1010" y1="920" x2="1010" y2="923" stroke="#d0d0d0" stroke-width="2"/>
<line x1="1028" y1="920" x2="1028" y2="923" stroke="#d0d0d0" stroke-width="2"/>
<line x1="1038" y1="920" x2="1038" y2="923" stroke="#d0d0d0" stroke-width="2"/>
<line x1="1047" y1="920" x2="1047" y2="923" stroke="#d0d0d0" stroke-width="2"/>
<line x1="1065" y1="920" x2="1065" y2="923" stroke="#d0d0d0" stroke-width="2"/>
<line x1="1075" y1="920" x2="1075" y2="923" stroke="#d0d0d0" stroke-width="2"/>
<line x1="1084" y1="920" x2="1084" y2="923" stroke="#d0d0d0" stroke-width="2"/>
<line x1="1102" y1="920" x2="1102" y2="923" stroke="#d0d0d0" stroke-width="2"/>
<line x1="1111" y1="920" x2="1111" y2="923" stroke="#d0d0d0" stroke-width="2"/>
<line x1="1121" y1="920" x2="1121" y2="923" stroke="#d0d0d0" stroke-width="2"/>
<line x1="1139" y1="920" x2="1139" y2="923" stroke="#d0d0d0" stroke-width="2"/>
<line x1="1148" y1="920" x2="1148" y2="923" stroke="#d0d0d0" stroke-width="2"/>
<line x1="1158" y1="920" x2="1158" y2="923" stroke="#d0d0d0" stroke-width="2"/>
<line x1="1176" y1="920" x2="1176" y2="923" stroke="#d0d0d0" stroke-width="2"/>
<line x1="1185" y1="920" x2="1185" y2="923" stroke="#d0d0d0" stroke-width="2"/>
<line x1="1195" y1="920" x2="1195" y2="923" stroke="#d0d0d0" stroke-width="2"/>
<line x1="1213" y1="920" x2="1213" y2="923" stroke="#d0d0d0" stroke-width="2"/>
<line x1="1222" y1="920" x2="1222" y2="923" stroke="#d0d0d0" stroke-width="2"/>
<line x1="1232" y1="920" x2="1232" y2="923" stroke="#d0d0d0" stroke-width="2"/>
<line x1="1250" y1="920" x2="1250" y2="923" stroke="#d0d0d0" stroke-width="2"/>
<line x1="1259" y1="920" x2="1259" y2="923" stroke="#d0d0d0" stroke-width="2"/>
<line x1="1268" y1="920" x2="1268" y2="923" stroke="#d0d0d0" stroke-width="2"/>
<line x1="1287" y1="920" x2="1287" y2="923" stroke="#d0d0d0" stroke-width="2"/>
<line x1="1296" y1="920" x2="1296" y2="923" stroke="#d0d0d0" stroke-width="2"/>
<line x1="1305" y1="920" x2="1305" y2="923" stroke="#d0d0d0" stroke-width="2"/>
<line x1="1324" y1="920" x2="1324" y2="923" stroke="#d0d0d0" stroke-width="2"/>
<line x1="1333" y1="920" x2="1333" y2="923" stroke="#d0d0d0" stroke-width="2"/>
<line x1="1342" y1="920" x2="1342" y2="923" stroke="#d0d0d0" stroke-width="2"/>
<line x1="1361" y1="920" x2="1361" y2="923" stroke="#d0d0d0" stroke-width="2"/>
<line x1="1370" y1="920" x2="1370" y2="923" stroke="#d0d0d0" stroke-width="2"/>
<line x1="1379" y1="920" x2="1379" y2="923" stroke="#d0d0d0" stroke-width="2"/>
<line x1="1398" y1="920" x2="1398" y2="923" stroke="#d0d0d0" stroke-width="2"/>
<line x1="1407" y1="920" x2="1407" y2="923" stroke="#d0d0d0" stroke-width="2"/>
<line x1="1416" y1="920" x2="1416" y2="923" stroke="#d0d0d0" stroke-width="2"/>
<line x1="1435" y1="920" x2="1435" y2="923" stroke="#d0d0d0" stroke-width="2"/>
<line x1="1444" y1="920" x2="1444" y2="923" stroke="#d0d0d0" stroke-width="2"/>
<line x1="1453" y1="920" x2="1453" y2="923" stroke="#d0d0d0" stroke-width="2"/>
<line x1="1472" y1="920" x2="1472" y2="923" stroke="#d0d0d0" stroke-width="2"/>
<line x1="1481" y1="920" x2="1481" y2="923" stroke="#d0d0d0" stroke-width="2"/>
<line x1="1490" y1="920" x2="1490" y2="923" stroke="#d0d0d0" stroke-width="2"/>
<line x1="1509" y1="920" x2="1509" y2="923" stroke="#d0d0d0" stroke-width="2"/>
<line x1="1518" y1="920" x2="1518" y2="923" stroke="#d0d0d0" stroke-width="2"/>
<line x1="1527" y1="920" x2="1527" y2="923" stroke="#d0d0d0" stroke-width="2"/>
<line x1="1546" y1="920" x2="1546" y2="923" stroke="#d0d0d0" stroke-width="2"/>
<line x1="1555" y1="920" x2="1555" y2="923" stroke="#d0d0d0" stroke-width="2"/>
<line x1="1564" y1="920" x2="1564" y2="923" stroke="#d0d0d0" stroke-width="2"/>
<line x1="1583" y1="920" x2="1583" y2="923" stroke="#d0d0d0" stroke-width="2"/>
<line x1="1592" y1="920" x2="1592" y2="923" stroke="#d0d0d0" stroke-width="2"/>
<line x1="1601" y1="920" x2="1601" y2="923" stroke="#d0d0d0" stroke-width="2"/>
<line x1="1619" y1="920" x2="1619" y2="923" stroke="#d0d0d0" stroke-width="2"/>
<line x1="1629" y1="920" x2="1629" y2="923" stroke="#d0d0d0" stroke-width="2"/>
<line x1="1638" y1="920" x2="1638" y2="923" stroke="#d0d0d0" stroke-width="2"/>
<line x1="1656" y1="920" x2="1656" y2="923" stroke="#d0d0d0" stroke-width="2"/>
<line x1="1666" y1="920" x2="1666" y2="923" stroke="#d0d0d0" stroke-width="2"/>
<line x1="1675" y1="920" x2="1675" y2="923" stroke="#d0d0d0" stroke-width="2"/>
<line x1="1693" y1="920" x2="1693" y2="923" stroke="#d0d0d0" stroke-width="2"/>
<line x1="1703" y1="920" x2="1703" y2="923" stroke="#d0d0d0" stroke-width="2"/>
<line x1="1712" y1="920" x2="1712" y2="923" stroke="#d0d0d0" stroke-width="2"/>
<line x1="1730" y1="920" x2="1730" y2="923" stroke="#d0d0d0" stroke-width="2"/>
<line x1="1740" y1="920" x2="1740" y2="923" stroke="#d0d0d0" stroke-width="2"/>
<line x1="1749" y1="920" x2="1749" y2="923" stroke="#d0d0d0" stroke-width="2"/>
<line x1="428" y1="206.5" x2="1757" y2="206.5" stroke="#6e6e6e" stroke-width="1"/>
<line x1="1756.5" y1="206" x2="1756.5" y2="919" stroke="#6e6e6e" stroke-width="1.5"/>
<text x="464.7" y="936.8" transform="rotate(-30 464.7 936.8)" text-anchor="end" class="dl">23.03.</text>
<text x="501.7" y="936.8" transform="rotate(-30 501.7 936.8)" text-anchor="end" class="dl">23.03.</text>
<text x="538.6" y="936.8" transform="rotate(-30 538.6 936.8)" text-anchor="end" class="dl">23.03.</text>
<text x="575.6" y="936.8" transform="rotate(-30 575.6 936.8)" text-anchor="end" class="dl">23.03.</text>
<text x="612.5" y="936.8" transform="rotate(-30 612.5 936.8)" text-anchor="end" class="dl">23.03.</text>
<text x="649.5" y="936.8" transform="rotate(-30 649.5 936.8)" text-anchor="end" class="dl">24.03.</text>
<text x="686.4" y="936.8" transform="rotate(-30 686.4 936.8)" text-anchor="end" class="dl">24.03.</text>
<text x="723.4" y="936.8" transform="rotate(-30 723.4 936.8)" text-anchor="end" class="dl">24.03.</text>
<text x="760.3" y="936.8" transform="rotate(-30 760.3 936.8)" text-anchor="end" class="dl">24.03.</text>
<text x="797.2" y="936.8" transform="rotate(-30 797.2 936.8)" text-anchor="end" class="dl">24.03.</text>
<text x="834.2" y="936.8" transform="rotate(-30 834.2 936.8)" text-anchor="end" class="dl">24.03.</text>
<text x="871.1" y="936.8" transform="rotate(-30 871.1 936.8)" text-anchor="end" class="dl">24.03.</text>
<text x="908.1" y="936.8" transform="rotate(-30 908.1 936.8)" text-anchor="end" class="dl">24.03.</text>
<text x="945" y="936.8" transform="rotate(-30 945 936.8)" text-anchor="end" class="dl">24.03.</text>
<text x="982" y="936.8" transform="rotate(-30 982 936.8)" text-anchor="end" class="dl">24.03.</text>
<text x="1018.9" y="936.8" transform="rotate(-30 1018.9 936.8)" text-anchor="end" class="dl">24.03.</text>
<text x="1055.9" y="936.8" transform="rotate(-30 1055.9 936.8)" text-anchor="end" class="dl">24.03.</text>
<text x="1092.8" y="936.8" transform="rotate(-30 1092.8 936.8)" text-anchor="end" class="dl">25.03.</text>
<text x="1129.7" y="936.8" transform="rotate(-30 1129.7 936.8)" text-anchor="end" class="dl">25.03.</text>
<text x="1166.7" y="936.8" transform="rotate(-30 1166.7 936.8)" text-anchor="end" class="dl">25.03.</text>
<text x="1203.6" y="936.8" transform="rotate(-30 1203.6 936.8)" text-anchor="end" class="dl">25.03.</text>
<text x="1240.6" y="936.8" transform="rotate(-30 1240.6 936.8)" text-anchor="end" class="dl">25.03.</text>
<text x="1277.5" y="936.8" transform="rotate(-30 1277.5 936.8)" text-anchor="end" class="dl">25.03.</text>
<text x="1314.5" y="936.8" transform="rotate(-30 1314.5 936.8)" text-anchor="end" class="dl">25.03.</text>
<text x="1351.4" y="936.8" transform="rotate(-30 1351.4 936.8)" text-anchor="end" class="dl">25.03.</text>
<text x="1388.4" y="936.8" transform="rotate(-30 1388.4 936.8)" text-anchor="end" class="dl">25.03.</text>
<text x="1425.3" y="936.8" transform="rotate(-30 1425.3 936.8)" text-anchor="end" class="dl">25.03.</text>
<text x="1462.2" y="936.8" transform="rotate(-30 1462.2 936.8)" text-anchor="end" class="dl">25.03.</text>
<text x="1499.2" y="936.8" transform="rotate(-30 1499.2 936.8)" text-anchor="end" class="dl">25.03.</text>
<text x="1536.1" y="936.8" transform="rotate(-30 1536.1 936.8)" text-anchor="end" class="dl">26.03.</text>
<text x="1573.1" y="936.8" transform="rotate(-30 1573.1 936.8)" text-anchor="end" class="dl">26.03.</text>
<text x="1610" y="936.8" transform="rotate(-30 1610 936.8)" text-anchor="end" class="dl">26.03.</text>
<text x="1647" y="936.8" transform="rotate(-30 1647 936.8)" text-anchor="end" class="dl">26.03.</text>
<text x="1683.9" y="936.8" transform="rotate(-30 1683.9 936.8)" text-anchor="end" class="dl">26.03.</text>
<text x="1720.9" y="936.8" transform="rotate(-30 1720.9 936.8)" text-anchor="end" class="dl">26.03.</text>
<text x="1757.8" y="936.8" transform="rotate(-30 1757.8 936.8)" text-anchor="end" class="dl">26.03.</text>
<path d="M428 433.1 L433 435.7 L437.4 432.4 L441.2 435.3 L445.5 432.2 L448.4 432.2 L453.3 435.6 L458.5 433.3 L461.6 433.3 L466.9 435.8 L469.8 435.8 L473.4 433 L477.9 435.6 L480.3 435.6 L484.8 432.9 L488.4 432.9 L493 436.2 L497 436.2 L502.2 433.1 L507.1 436.3 L511.4 432.1 L515.6 436.1 L520.7 432.6 L524.4 435.6 L528.7 433.1 L533.6 436.2 L538 432.6 L542.5 435.9 L546.2 433.2 L551.5 436.1 L555.4 432.6 L560.4 436.1 L564.4 432.6 L569.1 435.9 L573.7 432 L577.2 432 L582.3 436.5 L587.4 432.6 L591.7 435.4 L596.4 433 L600.8 435.8 L605.4 432.4 L609.8 435.3 L612.2 435.3 L616.8 432.1 L621.9 436.4 L627 432.4 L629 432.4 L632.6 436.4 L634.9 436.4 L639.6 432.8 L641.9 432.8 L646.5 435.5 L651.3 432.7 L655.8 435.3 L660.2 433 L664 433 L668.5 435.6 L673.5 433.3 L675.8 433.3 L680.7 435.5 L685.5 432.5 L689.5 432.5 L694.5 436 L697.8 436 L702.1 432.5 L706.9 435.4 L712.2 432.1 L717.4 435.7 L722.3 432.7 L725.9 436.5 L729.6 436.5 L734.9 432.5 L738.6 432.5 L740 434.3 L745 431 L752 431 L755 432 L758.7 435.4 L763.6 432.4 L768.3 436.1 L772.2 432.7 L777.1 436.7 L781.7 432.7 L785.3 435.3 L786 434.3 L790 428.8" fill="none" stroke="#b81430" stroke-width="1.2"/>
<path d="M790 428.8 L1103 428.3 L1126 427.5" fill="none" stroke="#e02828" stroke-width="1.3"/>
<path d="M1126 427.5 L1129 433 L1133.3 436.1 L1137 433.3 L1141.1 435.6 L1145.5 432.1 L1150.2 435.5 L1155.4 432.6 L1160.2 435.4 L1164.9 432.9 L1168.6 432.9 L1173.1 436.3 L1177.9 432 L1183 435.9 L1188.2 433.2 L1190.6 433.2 L1195.9 435.9 L1200.1 432.6 L1204.3 436.1 L1209.5 432.3 L1214.7 436.7 L1218.6 432.1 L1223.8 436.1 L1227.8 432.1 L1231.9 435.4 L1237.3 433.2 L1241.6 435.5 L1246.6 432.1 L1249.8 432.1 L1253.5 436.3 L1258.7 431.9 L1264.1 435.7 L1267.3 435.7 L1271 433 L1275.7 435.5 L1279.4 435.5 L1283.6 432 L1287.8 435.9 L1292.6 432.5 L1297.3 436.6 L1301.7 432.3 L1304.3 432.3 L1309.6 436 L1313.3 432.7 L1316.9 436.2 L1320.6 432.4 L1325.4 435.8 L1330.4 433.3 L1333.7 433.3 L1339.1 435.7 L1343.7 432.9 L1347.9 435.8 L1352 432.8 L1355.7 436.1 L1359.8 433 L1363.9 435.6 L1368.7 433.2 L1372.9 436.5 L1378.1 433.1 L1382.8 436.5 L1386.8 433.1 L1390.8 436.4 L1394.7 432.9 L1399.5 436.4 L1403.3 432.9 L1407.4 435.8 L1411.7 432.7 L1415.6 435.3 L1420.8 431.9 L1426.1 436.6 L1429.6 436.6 L1434.7 432.4 L1438.8 435.8 L1441 435.8 L1445.6 432.9 L1449.3 436.6 L1454.6 432 L1459.2 435.3 L1463.1 432.9 L1467.7 435.9 L1472.4 432.8 L1477.5 436 L1481.7 433 L1486.8 435.5 L1492.1 432.2 L1495.7 436.2 L1499.4 432.9 L1503.9 435.9 L1508.9 433.3 L1511.2 433.3 L1515 435.4 L1520.1 433.2 L1524.3 435.7 L1529.1 432.5 L1533 435.8 L1536.1 435.8 L1541 432.8 L1543.4 432.8 L1543 434.3" fill="none" stroke="#b81430" stroke-width="1.2"/>
<path d="M1543 434 L1553 427.5 L1593 427.5 L1597 431" fill="none" stroke="#e02828" stroke-width="1.3"/>
<path d="M1597 431 L1600 433 L1602.8 433 L1606.7 435.4 L1611.9 432.2 L1615.9 436.1 L1619.8 433.2 L1623.7 433.2 L1628.8 436.4 L1632.7 432.9 L1637.6 436.5 L1640 434.3 L1645 429 L1658 429 L1662 432.4 L1667 436.6 L1672.3 433.3 L1677.6 436.2 L1681.4 432.6 L1684.5 432.6 L1689.1 435.3 L1691.7 435.3 L1696.9 432.2 L1700.5 432.2 L1704.4 436.2 L1706.4 436.2 L1711.5 433 L1715.5 433 L1720.7 435.7 L1725.2 432.4 L1729.1 432.4 L1734 436.7 L1738.1 432.8 L1740.4 432.8 L1744.1 435.7 L1747.7 432.4 L1751.9 436.4 L1756 434.3" fill="none" stroke="#b81430" stroke-width="1.2"/>
<path d="M428 317.5 L1690 317.5 L1715 316.5 L1756 316.5" fill="none" stroke="#1a1ab4" stroke-width="1"/>
<path d="M428.5 604.5 H443.5 V611.5 H455.5 L591.5 604.5 V611.5 H603.5 L738.5 604.5 V611.5 H750.5 L886.5 604.5 V611.5 H898.5 L1033.5 604.5 V611.5 H1045.5 L1199.5 604.5 V611.5 H1211.5 L1328.5 604.5 V611.5 H1340.5 L1476.5 604.5 V611.5 H1488.5 L1623.5 604.5 V611.5 H1635.5 L1756.5 606.5" fill="none" stroke="#000" stroke-width="1.1"/>
<path d="M428 721.5 L1756 712.5" fill="none" stroke="#701010" stroke-width="1.1"/>
<path d="M428.5 815.5 H430.5 V806.5 H446.5 V799.5 H461.5 V792.5 H475.5 V784.5 H490.5 V776.5 H503.5 V768.5 H519.5 V761.5 H532.5 V753.5 H546.5 V746.5 H559.5 V738.5 H574.5 V729.5 H588.5 V722.5 H603.5 V715.5 H618.5 V706.5 H625.5 L626.5 689.5 H634.5 L636.5 670.5 H650.5 V661.5 H665.5 V654.5 H676.5 L678.5 634.5 H686.5 L687.5 617.5 H699.5 L701.5 605.5 L703.5 597.5 H718.5 V589.5 H733.5 V581.5 H738.5 V881.5 H749.5 V873.5 H763.5 V866.5 H778.5 V858.5 H795.5 V850.5 H809.5 V842.5 H828.5 V835.5 H842.5 V826.5 H865.5 V819.5 H881.5 V811.5 H897.5 V804.5 H913.5 V796.5 H928.5 V788.5 H945.5 V780.5 H960.5 V773.5 H975.5 V765.5 H990.5 V757.5 H1005.5 V749.5 H1022.5 V740.5 H1036.5 V734.5 H1051.5 V726.5 H1065.5 V718.5 H1080.5 V710.5 H1096.5 V702.5 H1129.5 V695.5 H1145.5 V687.5 H1162.5 V678.5 H1178.5 V671.5 H1181.5 V881.5 H1194.5 V873.5 H1208.5 V865.5 H1225.5 V858.5 H1240.5 V850.5 H1261.5 V842.5 H1282.5 V834.5 H1300.5 V826.5 H1316.5 V819.5 H1334.5 V811.5 H1350.5 V804.5 H1366.5 V796.5 H1381.5 V788.5 H1401.5 V781.5 H1418.5 V773.5 H1433.5 V765.5 H1449.5 V757.5 H1464.5 V749.5 H1480.5 V741.5 H1495.5 V734.5 H1510.5 V726.5 H1524.5 V717.5 H1539.5 V710.5 H1554.5 V702.5 H1569.5 V694.5 H1583.5 V686.5 H1599.5 V678.5 H1613.5 V670.5 H1623.5 V881.5 H1627.5 V873.5 H1641.5 V866.5 H1655.5 L1659.5 843.5 H1661.5 L1665.5 828.5 H1683.5 V820.5 H1691.5 L1693.5 801.5 L1697.5 783.5 H1718.5 V767.5 H1724.5 V756.5 H1740.5 V748.5 H1756.5" fill="none" stroke="#b52ab5" stroke-width="1.1"/>
<rect x="428" y="914" width="1329" height="4.3" fill="#0f8080"/>
<rect x="427" y="918" width="1330" height="1.5" fill="#0a1a1a"/>
<rect x="508" y="912.8" width="11" height="6.5" rx="2.5" fill="#0b4f55"/>
<rect x="512" y="914" width="1.3" height="4" fill="#7fd0d0"/><rect x="513.8" y="914" width="1.3" height="4" fill="#7fd0d0"/>
<rect x="832" y="912.8" width="11" height="6.5" rx="2.5" fill="#0b4f55"/>
<rect x="836" y="914" width="1.3" height="4" fill="#7fd0d0"/><rect x="837.8" y="914" width="1.3" height="4" fill="#7fd0d0"/>
<rect x="1379" y="912.8" width="11" height="6.5" rx="2.5" fill="#0b4f55"/>
<rect x="1383" y="914" width="1.3" height="4" fill="#7fd0d0"/><rect x="1384.8" y="914" width="1.3" height="4" fill="#7fd0d0"/>
<rect x="1751.5" y="913" width="5.5" height="6.3" rx="1" fill="#0b5a5f"/>
<line x1="1759" y1="904.5" x2="1761" y2="904.5" stroke="#ccc" stroke-width="1"/>
<text x="1766" y="909" class="al">0</text>
<rect x="426" y="206" width="2.4" height="135.5" fill="#0000ff"/>
<line x1="423.5" y1="337.3" x2="426" y2="337.3" stroke="#5a5aff" stroke-width="1.6"/>
<line x1="423.5" y1="333" x2="426" y2="333" stroke="#5a5aff" stroke-width="1.6"/>
<line x1="423.5" y1="328.8" x2="426" y2="328.8" stroke="#5a5aff" stroke-width="1.6"/>
<line x1="421.5" y1="324.6" x2="426" y2="324.6" stroke="#5a5aff" stroke-width="1.6"/>
<text x="420" y="328.6" text-anchor="end" class="al">100</text>
<line x1="423.5" y1="320.3" x2="426" y2="320.3" stroke="#5a5aff" stroke-width="1.6"/>
<line x1="423.5" y1="316.1" x2="426" y2="316.1" stroke="#5a5aff" stroke-width="1.6"/>
<line x1="423.5" y1="311.9" x2="426" y2="311.9" stroke="#5a5aff" stroke-width="1.6"/>
<line x1="421.5" y1="307.6" x2="426" y2="307.6" stroke="#5a5aff" stroke-width="1.6"/>
<text x="420" y="311.6" text-anchor="end" class="al">200</text>
<line x1="423.5" y1="303.4" x2="426" y2="303.4" stroke="#5a5aff" stroke-width="1.6"/>
<line x1="423.5" y1="299.2" x2="426" y2="299.2" stroke="#5a5aff" stroke-width="1.6"/>
<line x1="423.5" y1="294.9" x2="426" y2="294.9" stroke="#5a5aff" stroke-width="1.6"/>
<line x1="421.5" y1="290.7" x2="426" y2="290.7" stroke="#5a5aff" stroke-width="1.6"/>
<text x="420" y="294.7" text-anchor="end" class="al">300</text>
<line x1="423.5" y1="286.5" x2="426" y2="286.5" stroke="#5a5aff" stroke-width="1.6"/>
<line x1="423.5" y1="282.2" x2="426" y2="282.2" stroke="#5a5aff" stroke-width="1.6"/>
<line x1="423.5" y1="278" x2="426" y2="278" stroke="#5a5aff" stroke-width="1.6"/>
<line x1="421.5" y1="273.8" x2="426" y2="273.8" stroke="#5a5aff" stroke-width="1.6"/>
<text x="420" y="277.8" text-anchor="end" class="al">400</text>
<line x1="423.5" y1="269.5" x2="426" y2="269.5" stroke="#5a5aff" stroke-width="1.6"/>
<line x1="423.5" y1="265.3" x2="426" y2="265.3" stroke="#5a5aff" stroke-width="1.6"/>
<line x1="423.5" y1="261" x2="426" y2="261" stroke="#5a5aff" stroke-width="1.6"/>
<line x1="421.5" y1="256.8" x2="426" y2="256.8" stroke="#5a5aff" stroke-width="1.6"/>
<text x="420" y="260.8" text-anchor="end" class="al">500</text>
<line x1="423.5" y1="252.6" x2="426" y2="252.6" stroke="#5a5aff" stroke-width="1.6"/>
<line x1="423.5" y1="248.3" x2="426" y2="248.3" stroke="#5a5aff" stroke-width="1.6"/>
<line x1="423.5" y1="244.1" x2="426" y2="244.1" stroke="#5a5aff" stroke-width="1.6"/>
<line x1="421.5" y1="239.9" x2="426" y2="239.9" stroke="#5a5aff" stroke-width="1.6"/>
<text x="420" y="243.9" text-anchor="end" class="al">600</text>
<line x1="423.5" y1="235.6" x2="426" y2="235.6" stroke="#5a5aff" stroke-width="1.6"/>
<line x1="423.5" y1="231.4" x2="426" y2="231.4" stroke="#5a5aff" stroke-width="1.6"/>
<line x1="423.5" y1="227.2" x2="426" y2="227.2" stroke="#5a5aff" stroke-width="1.6"/>
<line x1="421.5" y1="222.9" x2="426" y2="222.9" stroke="#5a5aff" stroke-width="1.6"/>
<text x="420" y="226.9" text-anchor="end" class="al">700</text>
<line x1="423.5" y1="218.7" x2="426" y2="218.7" stroke="#5a5aff" stroke-width="1.6"/>
<line x1="423.5" y1="214.5" x2="426" y2="214.5" stroke="#5a5aff" stroke-width="1.6"/>
<line x1="423.5" y1="210.2" x2="426" y2="210.2" stroke="#5a5aff" stroke-width="1.6"/>
<rect x="426" y="341.5" width="2.4" height="134.7" fill="#ee0000"/>
<line x1="423.5" y1="469.5" x2="426" y2="469.5" stroke="#f04a4a" stroke-width="1.6"/>
<line x1="423.5" y1="462.7" x2="426" y2="462.7" stroke="#f04a4a" stroke-width="1.6"/>
<line x1="423.5" y1="456" x2="426" y2="456" stroke="#f04a4a" stroke-width="1.6"/>
<line x1="423.5" y1="449.3" x2="426" y2="449.3" stroke="#f04a4a" stroke-width="1.6"/>
<line x1="421.5" y1="442.5" x2="426" y2="442.5" stroke="#f04a4a" stroke-width="1.6"/>
<text x="420" y="446.5" text-anchor="end" class="al">0,5</text>
<line x1="423.5" y1="435.8" x2="426" y2="435.8" stroke="#f04a4a" stroke-width="1.6"/>
<line x1="423.5" y1="429.1" x2="426" y2="429.1" stroke="#f04a4a" stroke-width="1.6"/>
<line x1="423.5" y1="422.3" x2="426" y2="422.3" stroke="#f04a4a" stroke-width="1.6"/>
<line x1="423.5" y1="415.6" x2="426" y2="415.6" stroke="#f04a4a" stroke-width="1.6"/>
<line x1="421.5" y1="408.9" x2="426" y2="408.9" stroke="#f04a4a" stroke-width="1.6"/>
<text x="420" y="412.9" text-anchor="end" class="al">1</text>
<line x1="423.5" y1="402.1" x2="426" y2="402.1" stroke="#f04a4a" stroke-width="1.6"/>
<line x1="423.5" y1="395.4" x2="426" y2="395.4" stroke="#f04a4a" stroke-width="1.6"/>
<line x1="423.5" y1="388.6" x2="426" y2="388.6" stroke="#f04a4a" stroke-width="1.6"/>
<line x1="423.5" y1="381.9" x2="426" y2="381.9" stroke="#f04a4a" stroke-width="1.6"/>
<line x1="421.5" y1="375.2" x2="426" y2="375.2" stroke="#f04a4a" stroke-width="1.6"/>
<text x="420" y="379.2" text-anchor="end" class="al">1,5</text>
<line x1="423.5" y1="368.4" x2="426" y2="368.4" stroke="#f04a4a" stroke-width="1.6"/>
<line x1="423.5" y1="361.7" x2="426" y2="361.7" stroke="#f04a4a" stroke-width="1.6"/>
<line x1="423.5" y1="355" x2="426" y2="355" stroke="#f04a4a" stroke-width="1.6"/>
<line x1="423.5" y1="348.2" x2="426" y2="348.2" stroke="#f04a4a" stroke-width="1.6"/>
<rect x="426" y="476.2" width="2.4" height="135" fill="#000000"/>
<line x1="423.5" y1="606.7" x2="426" y2="606.7" stroke="#444444" stroke-width="1.6"/>
<line x1="423.5" y1="602.3" x2="426" y2="602.3" stroke="#444444" stroke-width="1.6"/>
<line x1="423.5" y1="597.8" x2="426" y2="597.8" stroke="#444444" stroke-width="1.6"/>
<line x1="423.5" y1="593.3" x2="426" y2="593.3" stroke="#444444" stroke-width="1.6"/>
<line x1="421.5" y1="588.9" x2="426" y2="588.9" stroke="#444444" stroke-width="1.6"/>
<text x="420" y="592.9" text-anchor="end" class="al">5.000</text>
<line x1="423.5" y1="584.4" x2="426" y2="584.4" stroke="#444444" stroke-width="1.6"/>
<line x1="423.5" y1="580" x2="426" y2="580" stroke="#444444" stroke-width="1.6"/>
<line x1="423.5" y1="575.5" x2="426" y2="575.5" stroke="#444444" stroke-width="1.6"/>
<line x1="423.5" y1="571" x2="426" y2="571" stroke="#444444" stroke-width="1.6"/>
<line x1="421.5" y1="566.6" x2="426" y2="566.6" stroke="#444444" stroke-width="1.6"/>
<text x="420" y="570.6" text-anchor="end" class="al">10.000</text>
<line x1="423.5" y1="562.1" x2="426" y2="562.1" stroke="#444444" stroke-width="1.6"/>
<line x1="423.5" y1="557.6" x2="426" y2="557.6" stroke="#444444" stroke-width="1.6"/>
<line x1="423.5" y1="553.2" x2="426" y2="553.2" stroke="#444444" stroke-width="1.6"/>
<line x1="423.5" y1="548.7" x2="426" y2="548.7" stroke="#444444" stroke-width="1.6"/>
<line x1="421.5" y1="544.3" x2="426" y2="544.3" stroke="#444444" stroke-width="1.6"/>
<text x="420" y="548.3" text-anchor="end" class="al">15.000</text>
<line x1="423.5" y1="539.8" x2="426" y2="539.8" stroke="#444444" stroke-width="1.6"/>
<line x1="423.5" y1="535.3" x2="426" y2="535.3" stroke="#444444" stroke-width="1.6"/>
<line x1="423.5" y1="530.9" x2="426" y2="530.9" stroke="#444444" stroke-width="1.6"/>
<line x1="423.5" y1="526.4" x2="426" y2="526.4" stroke="#444444" stroke-width="1.6"/>
<line x1="421.5" y1="521.9" x2="426" y2="521.9" stroke="#444444" stroke-width="1.6"/>
<text x="420" y="525.9" text-anchor="end" class="al">20.000</text>
<line x1="423.5" y1="517.5" x2="426" y2="517.5" stroke="#444444" stroke-width="1.6"/>
<line x1="423.5" y1="513" x2="426" y2="513" stroke="#444444" stroke-width="1.6"/>
<line x1="423.5" y1="508.6" x2="426" y2="508.6" stroke="#444444" stroke-width="1.6"/>
<line x1="423.5" y1="504.1" x2="426" y2="504.1" stroke="#444444" stroke-width="1.6"/>
<line x1="421.5" y1="499.6" x2="426" y2="499.6" stroke="#444444" stroke-width="1.6"/>
<text x="420" y="503.6" text-anchor="end" class="al">25.000</text>
<line x1="423.5" y1="495.2" x2="426" y2="495.2" stroke="#444444" stroke-width="1.6"/>
<line x1="423.5" y1="490.7" x2="426" y2="490.7" stroke="#444444" stroke-width="1.6"/>
<line x1="423.5" y1="486.2" x2="426" y2="486.2" stroke="#444444" stroke-width="1.6"/>
<line x1="423.5" y1="481.8" x2="426" y2="481.8" stroke="#444444" stroke-width="1.6"/>
<line x1="421.5" y1="477.3" x2="426" y2="477.3" stroke="#444444" stroke-width="1.6"/>
<rect x="426" y="611.2" width="2.4" height="135" fill="#800000"/>
<line x1="423.5" y1="741.7" x2="426" y2="741.7" stroke="#8a3a3a" stroke-width="1.6"/>
<line x1="423.5" y1="737.3" x2="426" y2="737.3" stroke="#8a3a3a" stroke-width="1.6"/>
<line x1="423.5" y1="732.8" x2="426" y2="732.8" stroke="#8a3a3a" stroke-width="1.6"/>
<line x1="423.5" y1="728.4" x2="426" y2="728.4" stroke="#8a3a3a" stroke-width="1.6"/>
<line x1="421.5" y1="723.9" x2="426" y2="723.9" stroke="#8a3a3a" stroke-width="1.6"/>
<text x="420" y="727.9" text-anchor="end" class="al">100</text>
<line x1="423.5" y1="719.5" x2="426" y2="719.5" stroke="#8a3a3a" stroke-width="1.6"/>
<line x1="423.5" y1="715" x2="426" y2="715" stroke="#8a3a3a" stroke-width="1.6"/>
<line x1="423.5" y1="710.6" x2="426" y2="710.6" stroke="#8a3a3a" stroke-width="1.6"/>
<line x1="423.5" y1="706.1" x2="426" y2="706.1" stroke="#8a3a3a" stroke-width="1.6"/>
<line x1="421.5" y1="701.6" x2="426" y2="701.6" stroke="#8a3a3a" stroke-width="1.6"/>
<text x="420" y="705.6" text-anchor="end" class="al">200</text>
<line x1="423.5" y1="697.2" x2="426" y2="697.2" stroke="#8a3a3a" stroke-width="1.6"/>
<line x1="423.5" y1="692.7" x2="426" y2="692.7" stroke="#8a3a3a" stroke-width="1.6"/>
<line x1="423.5" y1="688.3" x2="426" y2="688.3" stroke="#8a3a3a" stroke-width="1.6"/>
<line x1="423.5" y1="683.8" x2="426" y2="683.8" stroke="#8a3a3a" stroke-width="1.6"/>
<line x1="421.5" y1="679.4" x2="426" y2="679.4" stroke="#8a3a3a" stroke-width="1.6"/>
<text x="420" y="683.4" text-anchor="end" class="al">300</text>
<line x1="423.5" y1="674.9" x2="426" y2="674.9" stroke="#8a3a3a" stroke-width="1.6"/>
<line x1="423.5" y1="670.5" x2="426" y2="670.5" stroke="#8a3a3a" stroke-width="1.6"/>
<line x1="423.5" y1="666" x2="426" y2="666" stroke="#8a3a3a" stroke-width="1.6"/>
<line x1="423.5" y1="661.5" x2="426" y2="661.5" stroke="#8a3a3a" stroke-width="1.6"/>
<line x1="421.5" y1="657.1" x2="426" y2="657.1" stroke="#8a3a3a" stroke-width="1.6"/>
<text x="420" y="661.1" text-anchor="end" class="al">400</text>
<line x1="423.5" y1="652.6" x2="426" y2="652.6" stroke="#8a3a3a" stroke-width="1.6"/>
<line x1="423.5" y1="648.2" x2="426" y2="648.2" stroke="#8a3a3a" stroke-width="1.6"/>
<line x1="423.5" y1="643.7" x2="426" y2="643.7" stroke="#8a3a3a" stroke-width="1.6"/>
<line x1="423.5" y1="639.3" x2="426" y2="639.3" stroke="#8a3a3a" stroke-width="1.6"/>
<line x1="421.5" y1="634.8" x2="426" y2="634.8" stroke="#8a3a3a" stroke-width="1.6"/>
<text x="420" y="638.8" text-anchor="end" class="al">500</text>
<line x1="423.5" y1="630.4" x2="426" y2="630.4" stroke="#8a3a3a" stroke-width="1.6"/>
<line x1="423.5" y1="625.9" x2="426" y2="625.9" stroke="#8a3a3a" stroke-width="1.6"/>
<line x1="423.5" y1="621.4" x2="426" y2="621.4" stroke="#8a3a3a" stroke-width="1.6"/>
<line x1="423.5" y1="617" x2="426" y2="617" stroke="#8a3a3a" stroke-width="1.6"/>
<line x1="421.5" y1="612.5" x2="426" y2="612.5" stroke="#8a3a3a" stroke-width="1.6"/>
<rect x="426" y="746.2" width="2.4" height="135" fill="#ff00ff"/>
<line x1="423.5" y1="874.5" x2="426" y2="874.5" stroke="#ff55ff" stroke-width="1.6"/>
<line x1="423.5" y1="867.8" x2="426" y2="867.8" stroke="#ff55ff" stroke-width="1.6"/>
<line x1="423.5" y1="861.1" x2="426" y2="861.1" stroke="#ff55ff" stroke-width="1.6"/>
<line x1="423.5" y1="854.4" x2="426" y2="854.4" stroke="#ff55ff" stroke-width="1.6"/>
<line x1="421.5" y1="847.7" x2="426" y2="847.7" stroke="#ff55ff" stroke-width="1.6"/>
<text x="420" y="851.7" text-anchor="end" class="al">5.000</text>
<line x1="423.5" y1="841" x2="426" y2="841" stroke="#ff55ff" stroke-width="1.6"/>
<line x1="423.5" y1="834.3" x2="426" y2="834.3" stroke="#ff55ff" stroke-width="1.6"/>
<line x1="423.5" y1="827.6" x2="426" y2="827.6" stroke="#ff55ff" stroke-width="1.6"/>
<line x1="423.5" y1="820.9" x2="426" y2="820.9" stroke="#ff55ff" stroke-width="1.6"/>
<line x1="421.5" y1="814.2" x2="426" y2="814.2" stroke="#ff55ff" stroke-width="1.6"/>
<text x="420" y="818.2" text-anchor="end" class="al">10.000</text>
<line x1="423.5" y1="807.5" x2="426" y2="807.5" stroke="#ff55ff" stroke-width="1.6"/>
<line x1="423.5" y1="800.8" x2="426" y2="800.8" stroke="#ff55ff" stroke-width="1.6"/>
<line x1="423.5" y1="794.1" x2="426" y2="794.1" stroke="#ff55ff" stroke-width="1.6"/>
<line x1="423.5" y1="787.4" x2="426" y2="787.4" stroke="#ff55ff" stroke-width="1.6"/>
<line x1="421.5" y1="780.7" x2="426" y2="780.7" stroke="#ff55ff" stroke-width="1.6"/>
<text x="420" y="784.7" text-anchor="end" class="al">15.000</text>
<line x1="423.5" y1="774" x2="426" y2="774" stroke="#ff55ff" stroke-width="1.6"/>
<line x1="423.5" y1="767.3" x2="426" y2="767.3" stroke="#ff55ff" stroke-width="1.6"/>
<line x1="423.5" y1="760.6" x2="426" y2="760.6" stroke="#ff55ff" stroke-width="1.6"/>
<line x1="423.5" y1="753.9" x2="426" y2="753.9" stroke="#ff55ff" stroke-width="1.6"/>
<line x1="421.5" y1="747.2" x2="426" y2="747.2" stroke="#ff55ff" stroke-width="1.6"/>
<rect x="426" y="881.2" width="2.4" height="37" fill="#138080"/>
<text x="378" y="216.5" text-anchor="end" class="sl" fill="#1a1aa8">Pa</text>
<text x="378" y="337" text-anchor="end" class="sl" fill="#1a1aa8">Abluft 1 Trockner 1</text>
<text x="378" y="351.6" text-anchor="end" class="sl" fill="#d0182c">A</text>
<text x="378" y="472" text-anchor="end" class="sl" fill="#c8162c">M01_RNV_Rotorstrom_1</text>
<text x="378" y="486.6" text-anchor="end" class="sl" fill="#222222">l</text>
<text x="378" y="607.8" text-anchor="end" class="sl" fill="#222222">He Verbrauch Gesamt</text>
<text x="378" y="622.6" text-anchor="end" class="sl" fill="#7a1424">Pa</text>
<text x="378" y="742.8" text-anchor="end" class="sl" fill="#6a1020">Diffd Filter M01 Kab3</text>
<text x="378" y="757.6" text-anchor="end" class="sl" fill="#e020e0">l</text>
<text x="378" y="877.8" text-anchor="end" class="sl" fill="#d21ed2">Abw zu Speicher1 Heute</text>
<text x="378" y="913.5" text-anchor="end" class="sl" fill="#1a7a7a" font-weight="bold" style="font-size:11px">Kategorie</text>
<rect x="412.6" y="892.6" width="204.7" height="18.4" rx="3" fill="rgba(0,0,0,0.12)"/>
<rect x="411.4" y="891.4" width="203.2" height="16.9" rx="3" fill="#ffffe3" stroke="#6e6a5a" stroke-width="1.5"/>
<text x="612.3" y="904" text-anchor="end" class="tt">Geplante Stillstandszeiten - Reinigung</text>
<rect x="766.6" y="893.1" width="144.3" height="17.9" rx="3" fill="rgba(0,0,0,0.12)"/>
<rect x="765.4" y="891.9" width="142.8" height="16.4" rx="3" fill="#ffffe3" stroke="#6e6a5a" stroke-width="1.5"/>
<text x="905.9" y="904" text-anchor="end" class="tt">Ungeplante Stillstandszeit</text>
<rect x="864" y="915.3" width="120.3" height="17.6" rx="3" fill="rgba(0,0,0,0.12)"/>
<rect x="862.8" y="914" width="118.8" height="16.1" rx="3" fill="#ffffe3" stroke="#6e6a5a" stroke-width="1.5"/>
<text x="979.3" y="925.9" text-anchor="end" class="tt">Störung ohne Ausfall</text>
<rect x="1319.5" y="892.4" width="132.8" height="18.8" rx="3" fill="rgba(0,0,0,0.12)"/>
<rect x="1318.2" y="891.1" width="131.3" height="17.3" rx="3" fill="#ffffe3" stroke="#6e6a5a" stroke-width="1.5"/>
<text x="1447.3" y="904.2" text-anchor="end" class="tt">Geplante Stillstandszeit</text>
</g>
</svg>
<div class="abs" style="left:1723px;top:172px;width:182px;height:105px;border:1.5px solid #6a6a6a;border-top:none;background:linear-gradient(180deg,#f6f6f6 0px,#ececec 14px,#eaeaea 100%)"></div>
<div class="lg" style="top:178.5px;color:#4f4fc8">Abluft 1 Trockner 1 LU</div>
<div class="lg" style="top:192.5px;color:#e0505a">M01_RNV_Rotorstrom_1 LU</div>
<div class="lg" style="top:206.5px;color:#5a9a98">Kategorie LU</div>
<div class="lg" style="top:220.5px;color:#3c3c3c">He Verbrauch Gesamt LU</div>
<div class="lg" style="top:234.5px;color:#8a4040">Diffd Filter M01 Kab3 LU</div>
<div class="lg" style="top:248.5px;color:#d860d8">Abw zu Speicher1 Heute LU</div>
</body></html>
